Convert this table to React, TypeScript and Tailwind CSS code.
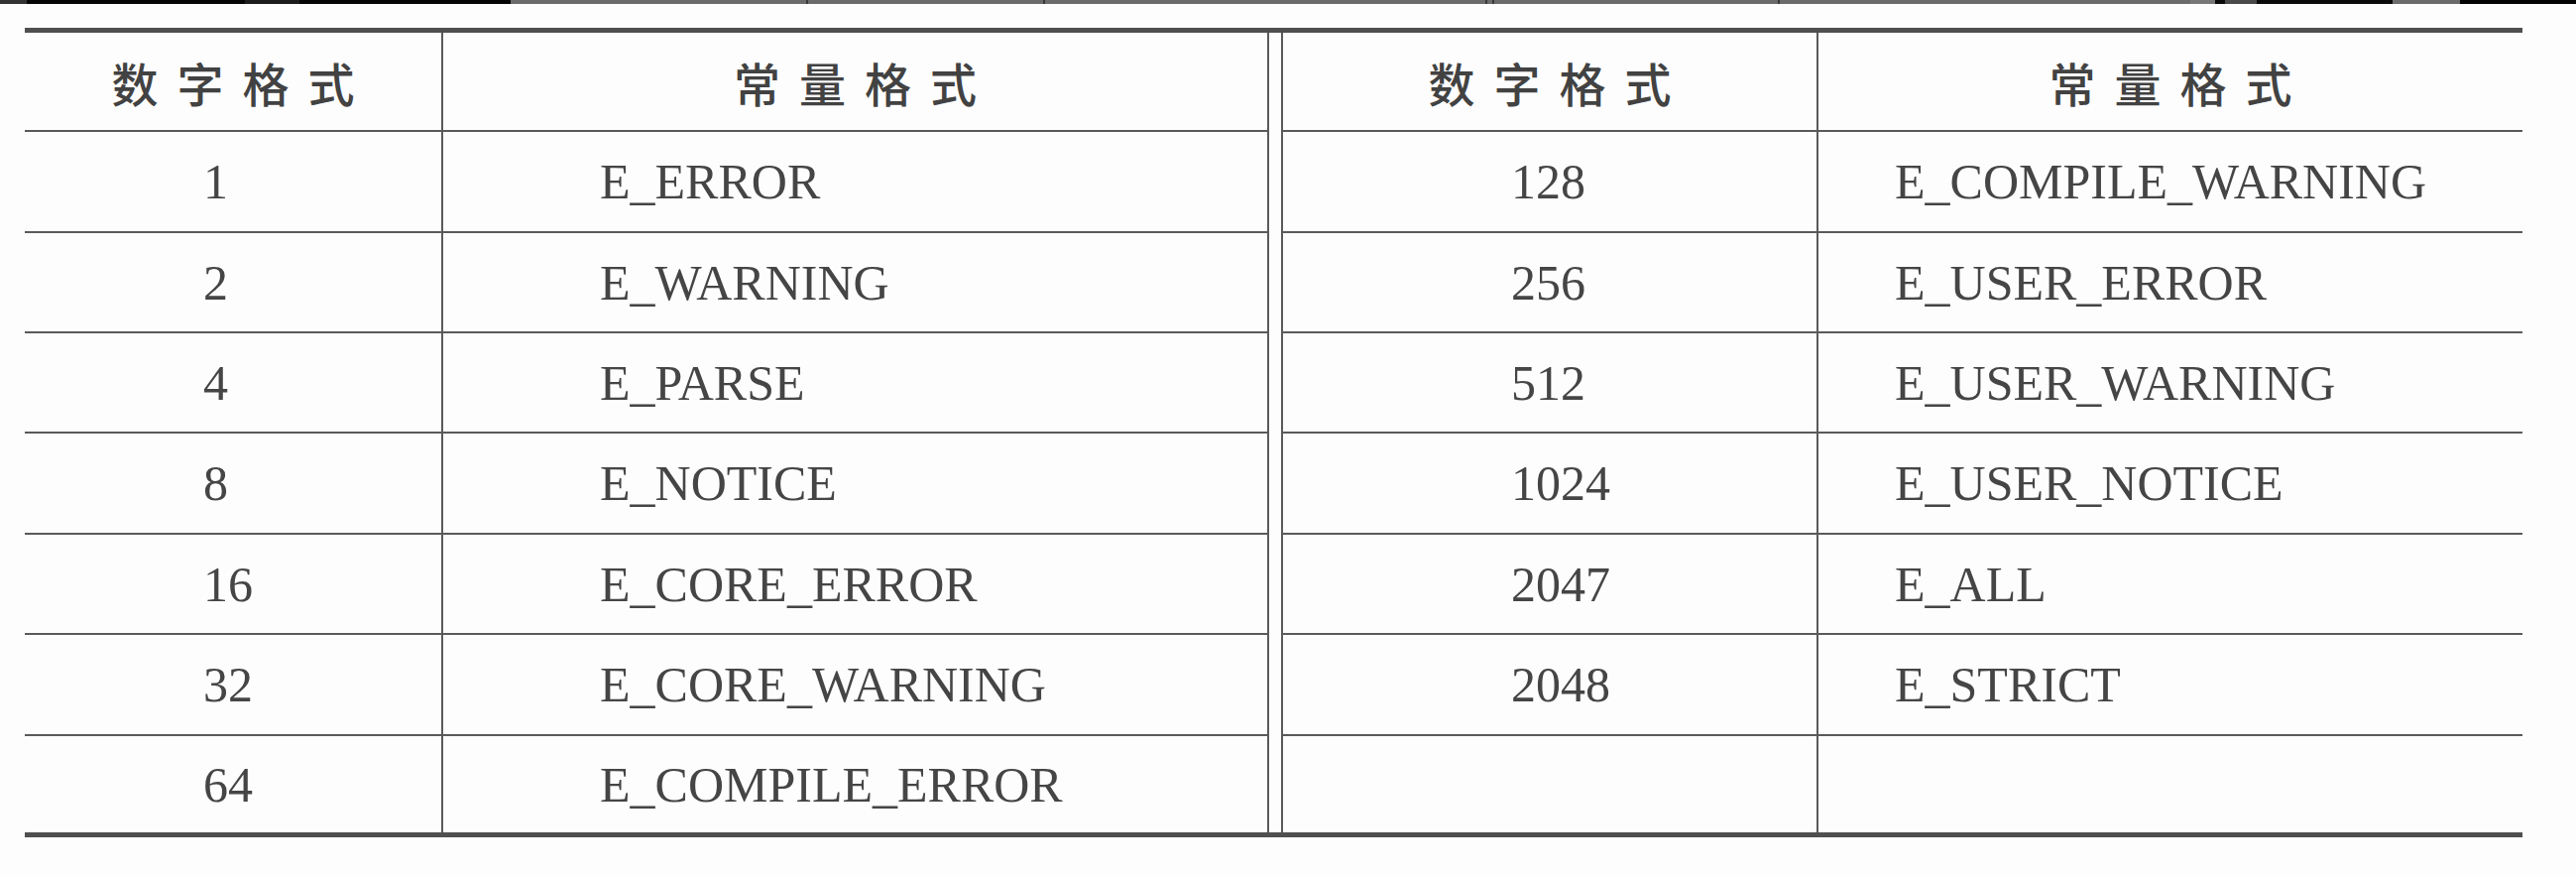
import React from "react";

const leftRows: [string, string][] = [
  ["1", "E_ERROR"],
  ["2", "E_WARNING"],
  ["4", "E_PARSE"],
  ["8", "E_NOTICE"],
  ["16", "E_CORE_ERROR"],
  ["32", "E_CORE_WARNING"],
  ["64", "E_COMPILE_ERROR"],
];

const rightRows: [string, string][] = [
  ["128", "E_COMPILE_WARNING"],
  ["256", "E_USER_ERROR"],
  ["512", "E_USER_WARNING"],
  ["1024", "E_USER_NOTICE"],
  ["2047", "E_ALL"],
  ["2048", "E_STRICT"],
  ["", ""],
];

const rowHeights = [
  "h-[102px]",
  "h-[101px]",
  "h-[101px]",
  "h-[102px]",
  "h-[101px]",
  "h-[102px]",
  "h-[97px]",
];

const serif = { fontFamily: '"Liberation Serif", "Times New Roman", serif' };
const cjk = { fontFamily: '"Noto Sans CJK SC", "Noto Sans", sans-serif' };

function TopStrip() {
  return (
    <div className="flex h-[4px] w-full">
      <div className="w-[27px] bg-[#333333]" />
      <div className="w-[220px] bg-[#050505]" />
      <div className="w-[55px] bg-[#1c1c1c]" />
      <div className="w-[213px] bg-[#050505]" />
      <div className="w-[298px] bg-[#6b6b6b]" />
      <div className="w-[2px] bg-[#3a3a3a]" />
      <div className="w-[237px] bg-[#6b6b6b]" />
      <div className="w-[2px] bg-[#3a3a3a]" />
      <div className="w-[444px] bg-[#6b6b6b]" />
      <div className="w-[2px] bg-[#3a3a3a]" />
      <div className="w-[5px] bg-[#6b6b6b]" />
      <div className="w-[2px] bg-[#3a3a3a]" />
      <div className="w-[286px] bg-[#6b6b6b]" />
      <div className="w-[2px] bg-[#3a3a3a]" />
      <div className="w-[414px] bg-[#6b6b6b]" />
      <div className="w-[25px] bg-[#777777]" />
      <div className="w-[10px] bg-[#0a0a0a]" />
      <div className="w-[32px] bg-[#4a4a4a]" />
      <div className="w-[137px] bg-[#0a0a0a]" />
      <div className="w-[68px] bg-[#6b6b6b]" />
      <div className="flex-1 bg-[#030303]" />
    </div>
  );
}

function HeaderText({ children }: { children: string }) {
  return (
    <span
      className="text-[47px] font-medium leading-none tracking-[19px] mr-[-19px] text-[#424242]"
      style={cjk}
    >
      {children}
    </span>
  );
}

export default function App() {
  return (
    <div className="w-[2598px] h-[884px] bg-[#fdfdfd] overflow-hidden">
      <TopStrip />
      <div className="mt-[24px] ml-[25px] w-[2519px] flex flex-col">
        <div className="h-[5px] bg-[#4f4f4f]" />
        {/* header */}
        <div className="flex h-[100px]">
          <div className="w-[422px] flex items-center justify-center border-r-2 border-b-2 border-[#5a5a5a]">
            <HeaderText>数字格式</HeaderText>
          </div>
          <div className="w-[833px] flex items-center justify-center border-r-2 border-b-2 border-[#5a5a5a]">
            <HeaderText>常量格式</HeaderText>
          </div>
          <div className="w-[12px]" />
          <div className="w-[542px] flex items-center justify-center border-l-2 border-r-2 border-b-2 border-[#5a5a5a]">
            <HeaderText>数字格式</HeaderText>
          </div>
          <div className="w-[710px] flex items-center justify-center border-b-2 border-[#5a5a5a]">
            <HeaderText>常量格式</HeaderText>
          </div>
        </div>
        {leftRows.map((l, i) => {
          const r = rightRows[i];
          const last = i === leftRows.length - 1;
          const bb = last ? "" : "border-b-2";
          return (
            <div key={i} className={`flex ${rowHeights[i]}`}>
              <div
                className={`w-[422px] flex items-center pl-[180px] border-r-2 ${bb} border-[#5a5a5a]`}
              >
                <span className="text-[50px] leading-none text-[#454545]" style={serif}>
                  {l[0]}
                </span>
              </div>
              <div
                className={`w-[833px] flex items-center pl-[158px] border-r-2 ${bb} border-[#5a5a5a]`}
              >
                <span className="text-[50px] leading-none text-[#454545]" style={serif}>
                  {l[1]}
                </span>
              </div>
              <div className="w-[12px]" />
              <div
                className={`w-[542px] flex items-center pl-[230px] border-l-2 border-r-2 ${bb} border-[#5a5a5a]`}
              >
                <span className="text-[50px] leading-none text-[#454545]" style={serif}>
                  {r[0]}
                </span>
              </div>
              <div className={`w-[710px] flex items-center pl-[77px] ${bb} border-[#5a5a5a]`}>
                <span className="text-[50px] leading-none text-[#454545]" style={serif}>
                  {r[1]}
                </span>
              </div>
            </div>
          );
        })}
        <div className="h-[5px] bg-[#4f4f4f]" />
      </div>
    </div>
  );
}
